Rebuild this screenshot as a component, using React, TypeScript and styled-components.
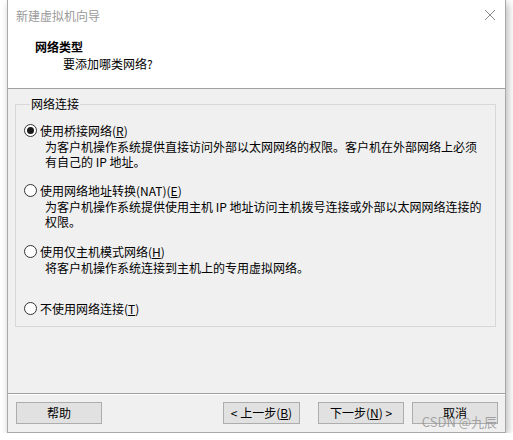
import React from "react";
import styled, { createGlobalStyle } from "styled-components";

const Global = createGlobalStyle`
  html, body { margin: 0; padding: 0; background: #ffffff; }
  body { font-family: "Noto Sans CJK SC", "Noto Sans", sans-serif; font-size: 12px; color: #000; }
  * { box-sizing: border-box; }
`;

const Window = styled.div`
  position: relative;
  margin-left: 7px;
  width: 499px;
  height: 433px;
  background: #f0f0f0;
  border: 1px solid #a8a8a8;
  border-top: none;
  display: flex;
  flex-direction: column;
  box-shadow: 2px 3px 8px rgba(0, 0, 0, 0.28);
`;

const TitleBar = styled.div`
  height: 30px;
  background: #fff;
  display: flex;
  align-items: center;
  justify-content: space-between;
  padding: 0 9px 0 8px;
  color: #9a9a9a;
  font-size: 12px;
`;

const CloseIcon = styled.svg`
  width: 12px;
  height: 12px;
  display: block;
`;

const Header = styled.div`
  background: #fff;
  height: 59px;
  border-bottom: 1px solid #a0a0a0;
  padding-top: 9px;
  display: flex;
  flex-direction: column;
`;

const HeaderTitle = styled.div`
  font-weight: bold;
  line-height: 16px;
  padding-left: 27px;
`;

const HeaderSub = styled.div`
  line-height: 16px;
  margin-top: 1px;
  padding-left: 55px;
`;

const Body = styled.div`
  height: 304px;
  padding: 7px 9px 0 7px;
`;

const GroupBox = styled.fieldset`
  margin: 0;
  padding: 11px 8px 10px 8px;
  border: 1px solid #d8d8d8;
  min-inline-size: 0;
`;

const Legend = styled.legend`
  padding: 0 1px;
  margin-left: 6px;
  line-height: 16px;
`;

const Option = styled.div<{ $top: number }>`
  margin-top: ${(p) => p.$top}px;
  display: flex;
  flex-direction: column;
`;

const OptionLabel = styled.label`
  display: flex;
  align-items: center;
  gap: 3px;
  line-height: 15px;
  height: 15px;
`;

const Radio = styled.span<{ $checked?: boolean }>`
  width: 13px;
  height: 13px;
  border-radius: 50%;
  border: 1px solid #333;
  background: #fff;
  display: flex;
  align-items: center;
  justify-content: center;
  flex: none;
  &::after {
    content: "";
    display: ${(p) => (p.$checked ? "block" : "none")};
    width: 7px;
    height: 7px;
    border-radius: 50%;
    background: #1a1a1a;
  }
`;

const Desc = styled.div`
  margin-top: 1px;
  padding-left: 21px;
  line-height: 15px;
  min-height: 30px;
  white-space: nowrap;
`;

const Footer = styled.div`
  border-top: 1px solid #a0a0a0;
  box-shadow: inset 0 1px 0 #ffffff;
  padding: 8px 7px 8px 8px;
  display: flex;
  align-items: center;
`;

const Button = styled.button<{ $w?: number; $gap?: number }>`
  width: ${(p) => p.$w ?? 86}px;
  height: 22px;
  margin-left: ${(p) => p.$gap ?? 0}px;
  background: #e1e1e1;
  border: 1px solid #adadad;
  padding: 0;
  font-family: inherit;
  font-size: 12px;
  color: #000;
  line-height: 20px;
`;

const Spacer = styled.div`
  flex: 1;
`;

const Watermark = styled.div`
  position: absolute;
  right: 8px;
  bottom: 1px;
  font-family: "Noto Sans CJK SC", "Noto Sans", sans-serif;
  font-size: 13px;
  color: rgba(140, 140, 140, 0.75);
  pointer-events: none;
`;

export default function App() {
  return (
    <>
      <Global />
      <Window>
        <TitleBar>
          <span>新建虚拟机向导</span>
          <CloseIcon viewBox="0 0 12 12">
            <path d="M1 1 L11 11 M11 1 L1 11" stroke="#8a8a8a" strokeWidth="1" fill="none" />
          </CloseIcon>
        </TitleBar>
        <Header>
          <HeaderTitle>网络类型</HeaderTitle>
          <HeaderSub>要添加哪类网络?</HeaderSub>
        </Header>
        <Body>
          <GroupBox>
            <Legend>网络连接</Legend>
            <Option $top={0}>
              <OptionLabel>
                <Radio $checked />
                <span>
                  使用桥接网络(<u>R</u>)
                </span>
              </OptionLabel>
              <Desc>
                为客户机操作系统提供直接访问外部以太网网络的权限。客户机在外部网络上必须
                <br />
                有自己的 IP 地址。
              </Desc>
            </Option>
            <Option $top={14}>
              <OptionLabel>
                <Radio />
                <span>
                  使用网络地址转换(NAT)(<u>E</u>)
                </span>
              </OptionLabel>
              <Desc>
                为客户机操作系统提供使用主机 IP 地址访问主机拨号连接或外部以太网网络连接的
                <br />
                权限。
              </Desc>
            </Option>
            <Option $top={15}>
              <OptionLabel>
                <Radio />
                <span>
                  使用仅主机模式网络(<u>H</u>)
                </span>
              </OptionLabel>
              <Desc>将客户机操作系统连接到主机上的专用虚拟网络。</Desc>
            </Option>
            <Option $top={11}>
              <OptionLabel>
                <Radio />
                <span>
                  不使用网络连接(<u>T</u>)
                </span>
              </OptionLabel>
            </Option>
          </GroupBox>
        </Body>
        <Footer>
          <Button>帮助</Button>
          <Spacer />
          <Button $w={77}>
            &lt; 上一步(<u>B</u>)
          </Button>
          <Button $gap={18}>
            下一步(<u>N</u>) &gt;
          </Button>
          <Button $gap={8}>取消</Button>
        </Footer>
        <Watermark>CSDN @九辰</Watermark>
      </Window>
    </>
  );
}
